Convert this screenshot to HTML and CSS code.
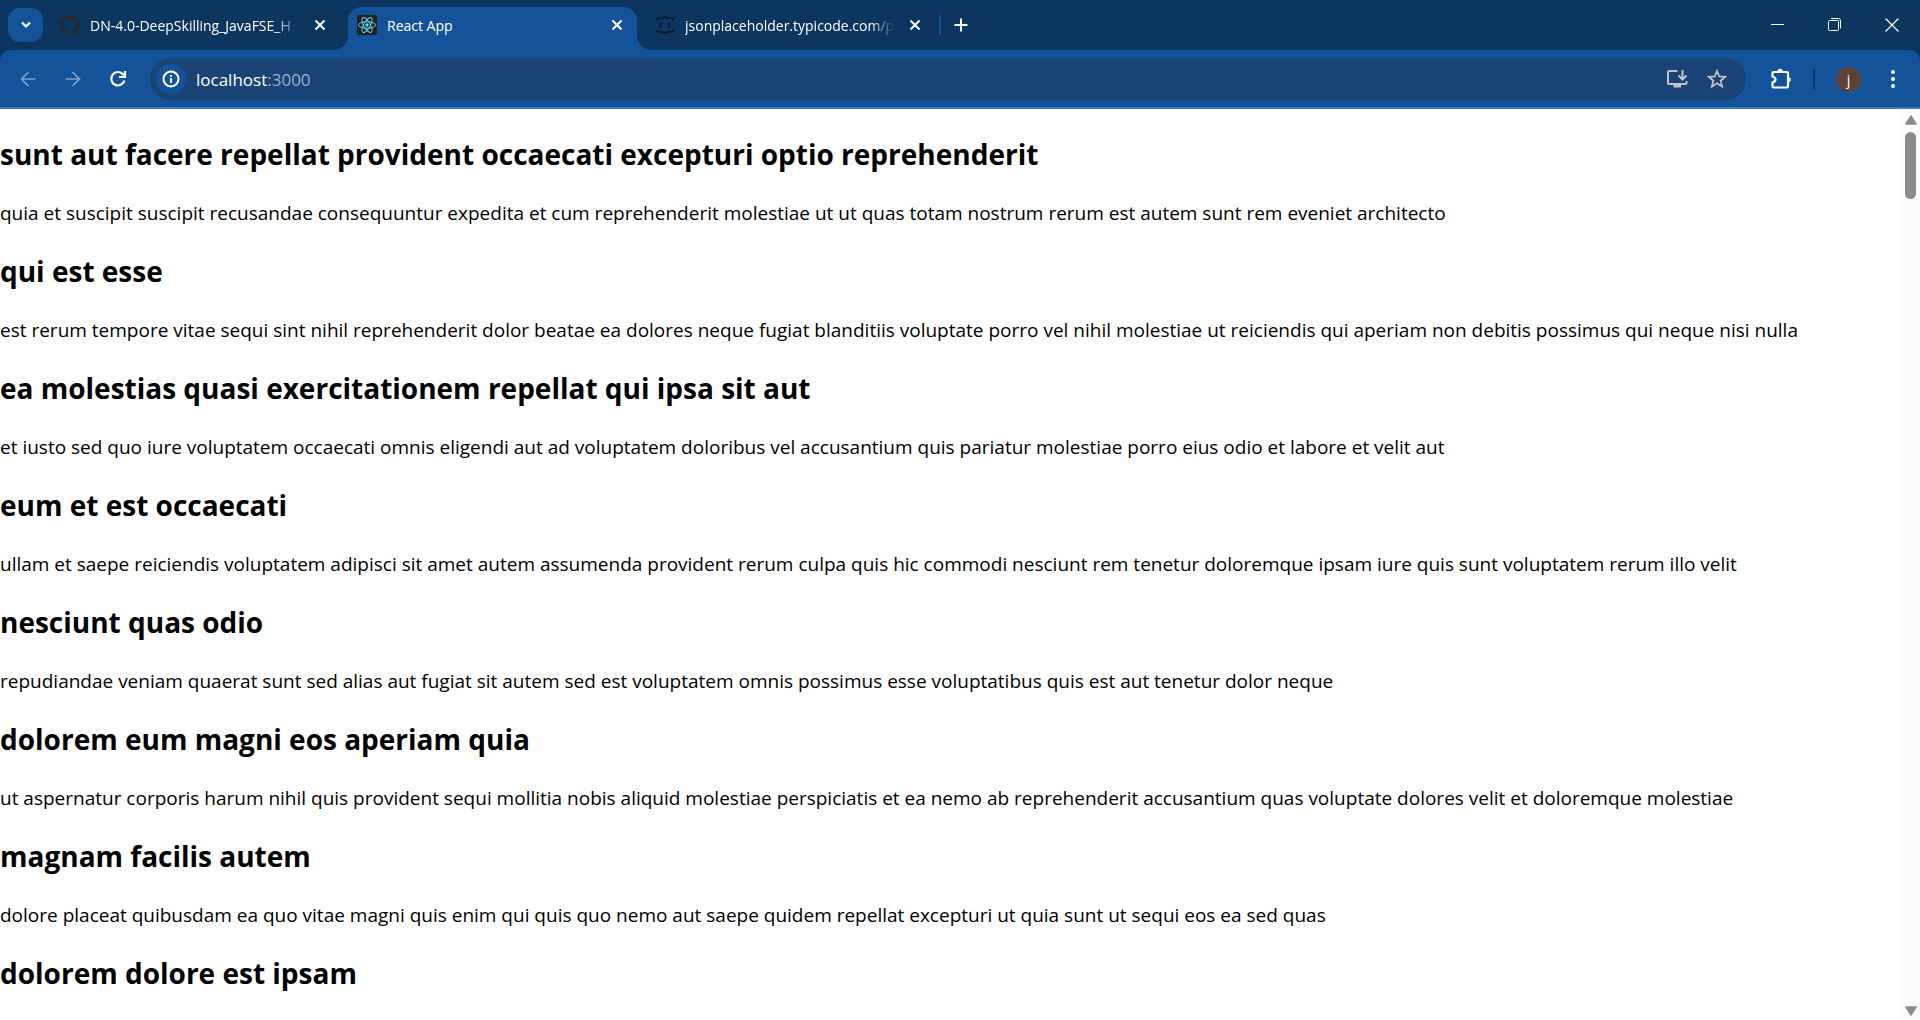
FILE: index.html
```html
<!DOCTYPE html>
<html lang="en">
<head>
<meta charset="utf-8">
<title>React App</title>
<link rel="stylesheet" href="styles.css">
</head>
<body>
<header class="browser">
  <div class="tab-strip">
    <button class="tab-search" aria-label="Search tabs"><svg width="12" height="8" viewBox="0 0 12 8"><path d="M2 1.5 6 5.5 10 1.5" fill="none" stroke="#fff" stroke-width="2.2"/></svg></button>
    <div class="tab tab-first">
      <svg class="favicon" viewBox="0 0 16 16" fill="#24292f"><path d="M8 0C3.58 0 0 3.58 0 8c0 3.54 2.29 6.53 5.47 7.59.4.07.55-.17.55-.38 0-.19-.01-.82-.01-1.49-2.01.37-2.53-.49-2.69-.94-.09-.23-.48-.94-.82-1.13-.28-.15-.68-.52-.01-.53.63-.01 1.08.58 1.23.82.72 1.21 1.87.87 2.33.66.07-.52.28-.87.51-1.07-1.78-.2-3.64-.89-3.64-3.95 0-.87.31-1.59.82-2.15-.08-.2-.36-1.02.08-2.12 0 0 .67-.21 2.2.82.64-.18 1.32-.27 2-.27s1.36.09 2 .27c1.53-1.04 2.2-.82 2.2-.82.44 1.1.16 1.92.08 2.12.51.56.82 1.27.82 2.15 0 3.07-1.87 3.75-3.65 3.95.29.25.54.73.54 1.48 0 1.07-.01 1.93-.01 2.2 0 .21.15.46.55.38A8.01 8.01 0 0 0 16 8c0-4.42-3.58-8-8-8Z"/></svg>
      <span class="tab-title fade">DN-4.0-DeepSkilling_JavaFSE_H</span>
      <button class="tab-close" aria-label="Close tab"><svg width="12" height="12" viewBox="0 0 12 12"><path d="M1.500 1.500 10.500 10.500M10.500 1.500 1.500 10.500" stroke="#fff" stroke-width="2"/></svg></button>
    </div>
    <div class="tab tab-active">
      <svg class="favicon" viewBox="0 0 20 20"><rect width="20" height="20" rx="2" fill="#222"/><g fill="none" stroke="#61dafb" stroke-width=".9"><ellipse cx="10" cy="10" rx="8.500" ry="3.300"/><ellipse cx="10" cy="10" rx="8.500" ry="3.300" transform="rotate(60 10 10)"/><ellipse cx="10" cy="10" rx="8.500" ry="3.300" transform="rotate(120 10 10)"/></g><circle cx="10" cy="10" r="1.700" fill="#61dafb"/></svg>
      <span class="tab-title">React App</span>
      <button class="tab-close" aria-label="Close tab"><svg width="12" height="12" viewBox="0 0 12 12"><path d="M1.500 1.500 10.500 10.500M10.500 1.500 1.500 10.500" stroke="#fff" stroke-width="2"/></svg></button>
    </div>
    <div class="tab tab-last">
      <svg class="favicon" viewBox="0 0 20 20" fill="none" stroke="#0a1420" stroke-width="1.700"><path d="M1 5Q2 3 5 3H8L10 1.500 12 3H15Q18 3 19 5M1 15Q2 17 5 17H8L10 18.500 12 17H15Q18 17 19 15M5.500 7.500V12.500M14 7.500V12.500"/></svg>
      <span class="tab-title fade">jsonplaceholder.typicode.com/p</span>
      <button class="tab-close" aria-label="Close tab"><svg width="12" height="12" viewBox="0 0 12 12"><path d="M1.500 1.500 10.500 10.500M10.500 1.500 1.500 10.500" stroke="#fff" stroke-width="2"/></svg></button>
    </div>
    <span class="tab-divider"></span>
    <button class="new-tab" aria-label="New tab"><svg width="14" height="14" viewBox="0 0 14 14"><path d="M7 .500V13.500M.500 7H13.500" stroke="#fff" stroke-width="2"/></svg></button>
    <div class="window-controls">
      <button aria-label="Minimize"><svg width="14" height="14" viewBox="0 0 14 14"><path d="M0 6.500H13" stroke="#fff"/></svg></button>
      <button aria-label="Restore"><svg width="14" height="14" viewBox="0 0 14 14" fill="none" stroke="#fff"><rect x=".500" y="2.500" width="10" height="10" rx="1"/><path d="M3 .500H10.500Q12.500.500 12.500 3V10.500"/></svg></button>
      <button aria-label="Close window"><svg width="14" height="14" viewBox="0 0 14 14"><path d="M.500.500 13.500 13.500M13.500.500.500 13.500" stroke="#fff" stroke-width="1.200"/></svg></button>
    </div>
  </div>
  <div class="toolbar">
    <nav class="nav-buttons">
      <button aria-label="Back"><svg width="16" height="16" viewBox="0 0 16 16" fill="none" stroke="#7f9fc8" stroke-width="1.700"><path d="M15.500 8H2M8.500 1 1.500 8 8.500 15"/></svg></button>
      <button aria-label="Forward"><svg width="16" height="16" viewBox="0 0 16 16" fill="none" stroke="#7f9fc8" stroke-width="1.700"><path d="M.500 8H14M7.500 1 14.500 8 7.500 15"/></svg></button>
      <button aria-label="Reload"><svg width="18" height="18" viewBox="0 0 18 18" fill="none" stroke="#fff" stroke-width="2.200"><path d="M15.400 10.500A6.700 6.700 0 1 1 14 4.300L16 6.500M16 1V7H10"/></svg></button>
    </nav>
    <div class="omnibox">
      <button class="site-info" aria-label="View site information"><svg width="18" height="18" viewBox="0 0 18 18" fill="none" stroke="#fff" stroke-width="2"><circle cx="9" cy="9" r="7.500"/><path d="M9 8V13M9 5V6.800"/></svg></button>
      <a class="address" href="#">localhost<span class="port">:3000</span></a>
      <button class="box-icon" aria-label="Install"><svg width="22" height="20" viewBox="0 0 22 20" fill="none" stroke="#c0c2c5" stroke-width="2"><path d="M11.500 2H3Q2 2 2 3V14Q2 15 3 15H19.500Q20.500 15 20.500 14V12M16.500 1V10M12.500 6.500 16.500 10.500 20.500 6.500"/><path d="M7.500 15H15V18.500H7.500Z" fill="#c0c2c5" stroke="none"/></svg></button>
      <button class="box-icon" aria-label="Bookmark"><svg width="20" height="20" viewBox="0 0 20 20" fill="none" stroke="#c0c2c5" stroke-width="1.800"><path d="m10 2 2.200 5.500 6 .4-4.600 3.800 1.500 5.800L10 14.300l-5.100 3.200 1.500-5.800L1.800 7.900l6-.4Z"/></svg></button>
    </div>
    <div class="actions">
      <button aria-label="Extensions"><svg width="22" height="22" viewBox="0 0 22 22"><path d="M3.500 4H17Q18 4 18 5V18.500Q18 19.500 17 19.500H3.500Q2.500 19.500 2.500 18.500V14.500Q5.500 13.500 5.500 11.500T2.500 8.500V5Q2.500 4 3.500 4Z" fill="none" stroke="#fff" stroke-width="2.200"/><path d="M7.500 3.500a2.700 2.700 0 0 1 5.400 0ZM18 9a2.700 2.700 0 0 1 0 5.400Z" fill="#fff"/></svg></button>
      <span class="divider"></span>
      <button class="profile" aria-label="Profile">j</button>
      <button class="menu" aria-label="Menu"><svg width="4" height="18" viewBox="0 0 4 18" fill="#fff"><circle cx="2" cy="2" r="2"/><circle cx="2" cy="9" r="2"/><circle cx="2" cy="16" r="2"/></svg></button>
    </div>
  </div>
</header>
<div class="viewport">
  <main class="posts">
    <article><h2>sunt aut facere repellat provident occaecati excepturi optio reprehenderit</h2>
    <p>quia et suscipit suscipit recusandae consequuntur expedita et cum reprehenderit molestiae ut ut quas totam nostrum rerum est autem sunt rem eveniet architecto</p></article>
    <article><h2>qui est esse</h2>
    <p>est rerum tempore vitae sequi sint nihil reprehenderit dolor beatae ea dolores neque fugiat blanditiis voluptate porro vel nihil molestiae ut reiciendis qui aperiam non debitis possimus qui neque nisi nulla</p></article>
    <article><h2>ea molestias quasi exercitationem repellat qui ipsa sit aut</h2>
    <p>et iusto sed quo iure voluptatem occaecati omnis eligendi aut ad voluptatem doloribus vel accusantium quis pariatur molestiae porro eius odio et labore et velit aut</p></article>
    <article><h2>eum et est occaecati</h2>
    <p>ullam et saepe reiciendis voluptatem adipisci sit amet autem assumenda provident rerum culpa quis hic commodi nesciunt rem tenetur doloremque ipsam iure quis sunt voluptatem rerum illo velit</p></article>
    <article><h2>nesciunt quas odio</h2>
    <p>repudiandae veniam quaerat sunt sed alias aut fugiat sit autem sed est voluptatem omnis possimus esse voluptatibus quis est aut tenetur dolor neque</p></article>
    <article><h2>dolorem eum magni eos aperiam quia</h2>
    <p>ut aspernatur corporis harum nihil quis provident sequi mollitia nobis aliquid molestiae perspiciatis et ea nemo ab reprehenderit accusantium quas voluptate dolores velit et doloremque molestiae</p></article>
    <article><h2>magnam facilis autem</h2>
    <p>dolore placeat quibusdam ea quo vitae magni quis enim qui quis quo nemo aut saepe quidem repellat excepturi ut quia sunt ut sequi eos ea sed quas</p></article>
    <article><h2>dolorem dolore est ipsam</h2></article>
  </main>
  <div class="scrollbar" aria-hidden="true">
    <svg width="12" height="10" viewBox="0 0 12 10"><path d="M6 1 11 9H1Z" fill="#8b8b8b" stroke="#8b8b8b" stroke-width="1.500" stroke-linejoin="round"/></svg>
    <span class="thumb"></span>
    <svg class="down" width="12" height="10" viewBox="0 0 12 10"><path d="M6 9 11 1H1Z" fill="#8b8b8b" stroke="#8b8b8b" stroke-width="1.500" stroke-linejoin="round"/></svg>
  </div>
</div>
</body>
</html>
```
FILE: styles.css
```css
* { box-sizing: border-box; }

body {
  margin: 0;
  height: 100vh;
  display: flex;
  flex-direction: column;
  overflow: hidden;
  background: #fff;
  color: #000;
  font-family: "Open Sans", "Noto Sans", sans-serif;
}

button {
  display: flex;
  align-items: center;
  justify-content: center;
  padding: 0;
  border: 0;
  background: none;
  color: #fff;
  font: inherit;
}

svg { display: block; flex: none; }

/* Browser frame */
.browser { flex: none; background: #0c3560; }

.tab-strip {
  display: flex;
  align-items: center;
  height: 50px;
  padding-left: 8px;
  color: #fff;
}

.tab-search {
  width: 35px;
  height: 34px;
  border-radius: 12px;
  background: #14539a;
}

.tab {
  display: flex;
  align-items: center;
  height: 50px;
  font-size: 14px;
}

.tab-first { width: 305px; padding: 0 18px 0 17px; }

.tab-active {
  position: relative;
  width: 289px;
  height: 43px;
  margin-top: 7px;
  padding: 0 10px 7px 9px;
  border-radius: 14px 14px 0 0;
  background: #14539a;
}

.tab-active::before,
.tab-active::after {
  content: "";
  position: absolute;
  bottom: 0;
  width: 15px;
  height: 15px;
}

.tab-active::before {
  right: 100%;
  background: radial-gradient(circle at 0 0, transparent 15px, #14539a 15px);
}

.tab-active::after {
  left: 100%;
  background: radial-gradient(circle at 100% 0, transparent 15px, #14539a 15px);
}

.tab-last { width: 302px; padding: 0 14px 0 18px; }

.favicon { width: 20px; height: 20px; }

.tab-title {
  flex: 1;
  min-width: 0;
  margin: 0 10px;
  white-space: nowrap;
}

.fade { mask-image: linear-gradient(to right, #000 88%, transparent); }

.tab-close { width: 20px; height: 20px; }

.tab-divider { width: 2px; height: 20px; border-radius: 1px; background: #14539a; }

.new-tab { width: 40px; height: 34px; }

.window-controls { display: flex; margin-left: auto; }

.window-controls button { width: 57px; height: 50px; }

.toolbar {
  display: flex;
  align-items: center;
  height: 59px;
  padding-top: 1px;
  border-bottom: 2px solid #4079b8;
  border-radius: 10px 10px 0 0;
  background: #14539a;
}

.nav-buttons { display: flex; padding-left: 5px; }

.nav-buttons button { width: 45px; height: 42px; }

.omnibox {
  display: flex;
  flex: 1;
  align-items: center;
  height: 42px;
  margin-left: 10px;
  padding: 0 9px 0 6px;
  border-radius: 21px;
  background: #194475;
}

.site-info {
  width: 30px;
  height: 30px;
  border-radius: 50%;
  background: #14539a;
}

.address {
  flex: 1;
  padding-left: 10px;
  color: #fff;
  font-size: 17px;
  text-decoration: none;
}

.port { color: #97afcb; }

.box-icon { width: 40px; height: 40px; }

.actions { display: flex; align-items: center; padding-left: 15px; padding-right: 7px; }

.actions button { width: 40px; height: 40px; }

.divider { width: 2px; height: 20px; margin: 0 21px 0 12px; background: #0c3560; }

.actions .profile {
  width: 25px;
  height: 25px;
  margin-right: 12px;
  border-radius: 50%;
  background: #5f4037;
  font-size: 14px;
}

/* Page */
.viewport { display: flex; flex: 1; min-height: 0; }

.posts { flex: 1; min-width: 0; padding-top: 25px; overflow: hidden; }

.posts h2 { margin: 0 0 26px; font-size: 28px; font-weight: 700; line-height: 40px; white-space: nowrap; }

.posts p { margin: 0 0 24px; font-size: 19px; line-height: 27px; white-space: nowrap; }

.scrollbar {
  display: flex;
  flex: none;
  flex-direction: column;
  align-items: center;
  width: 19px;
  padding: 6px 0 4px;
  background: #fcfcfc;
}

.thumb { width: 11px; height: 67px; margin-top: 7px; border-radius: 6px; background: #8b8b8b; }

.down { margin-top: auto; }
```
